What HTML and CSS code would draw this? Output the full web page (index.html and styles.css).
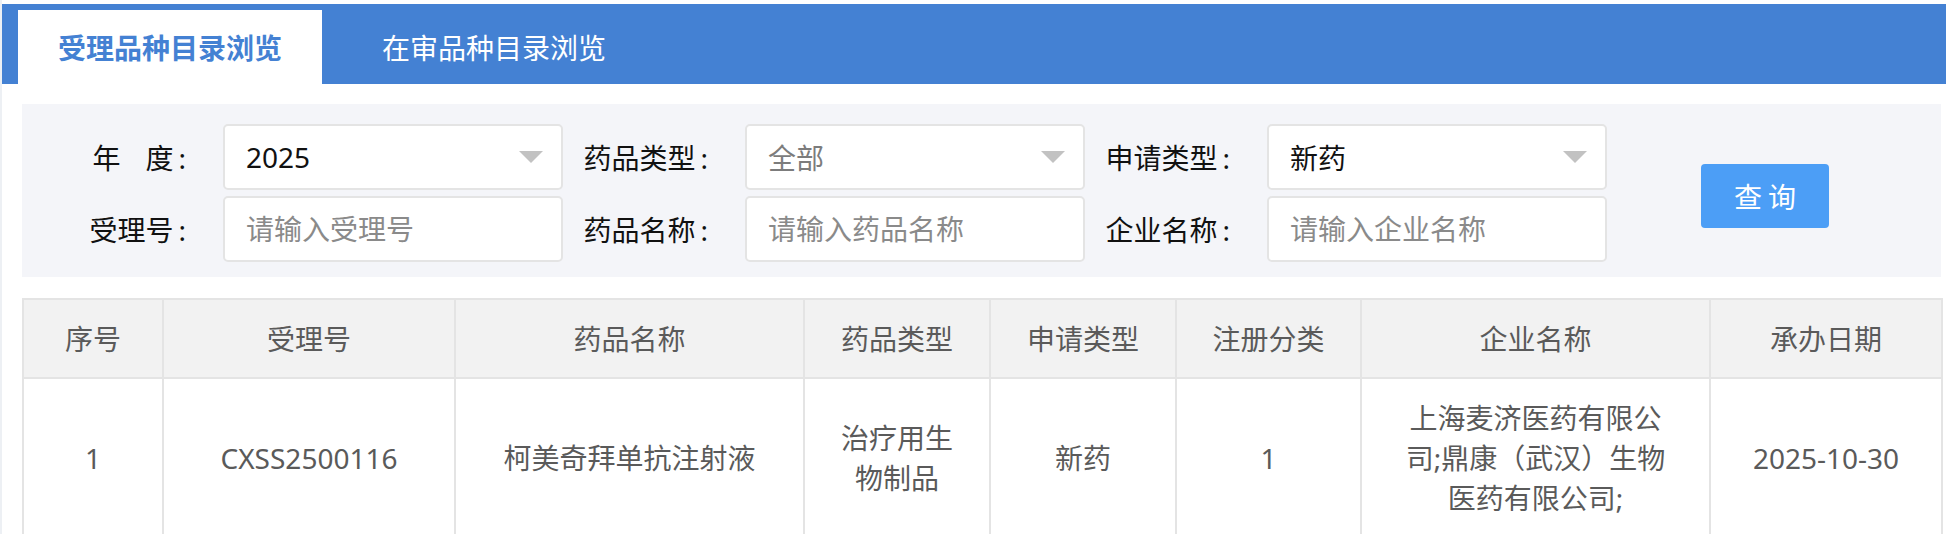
FILE: index.html
```html
<!DOCTYPE html>
<html lang="zh-CN">
<head>
<meta charset="UTF-8">
<meta name="viewport" content="width=device-width, initial-scale=1.0">
<title>受理品种目录浏览</title>
<link rel="stylesheet" href="styles.css">
</head>
<body>
    <div class="page">
        <!-- 标签页 -->
        <div class="tabs">
            <div class="tab active">受理品种目录浏览</div>
            <div class="tab">在审品种目录浏览</div>
        </div>

        <div class="content">
            <!-- 查询条件 -->
            <div class="filter">
                <div class="fields">
                    <div class="field">
                        <label class="label">年<span class="gap"></span>度<span class="colon">:</span></label>
                        <div class="box select">
                            <span class="value">2025</span>
                            <span class="arrow"></span>
                        </div>
                    </div>
                    <div class="field">
                        <label class="label">药品类型<span class="colon">:</span></label>
                        <div class="box select">
                            <span class="value muted">全部</span>
                            <span class="arrow"></span>
                        </div>
                    </div>
                    <div class="field">
                        <label class="label">申请类型<span class="colon">:</span></label>
                        <div class="box select">
                            <span class="value">新药</span>
                            <span class="arrow"></span>
                        </div>
                    </div>
                    <div class="field">
                        <label class="label">受理号<span class="colon">:</span></label>
                        <input class="box" type="text" placeholder="请输入受理号">
                    </div>
                    <div class="field">
                        <label class="label">药品名称<span class="colon">:</span></label>
                        <input class="box" type="text" placeholder="请输入药品名称">
                    </div>
                    <div class="field">
                        <label class="label">企业名称<span class="colon">:</span></label>
                        <input class="box" type="text" placeholder="请输入企业名称">
                    </div>
                </div>
                <button class="btn-search">查询</button>
            </div>

            <!-- 结果列表 -->
            <table class="list">
                <colgroup>
                    <col style="width:140px">
                    <col style="width:292px">
                    <col style="width:349px">
                    <col style="width:186px">
                    <col style="width:186px">
                    <col style="width:185px">
                    <col style="width:349px">
                    <col style="width:232px">
                </colgroup>
                <thead>
                    <tr>
                        <th>序号</th>
                        <th>受理号</th>
                        <th>药品名称</th>
                        <th>药品类型</th>
                        <th>申请类型</th>
                        <th>注册分类</th>
                        <th>企业名称</th>
                        <th>承办日期</th>
                    </tr>
                </thead>
                <tbody>
                    <tr>
                        <td>1</td>
                        <td>CXSS2500116</td>
                        <td class="wide">柯美奇拜单抗注射液</td>
                        <td>治疗用生物制品</td>
                        <td>新药</td>
                        <td>1</td>
                        <td class="wide">上海麦济医药有限公司;鼎康（武汉）生物医药有限公司;</td>
                        <td>2025-10-30</td>
                    </tr>
                </tbody>
            </table>
        </div>
    </div>
</body>
</html>
```

FILE: styles.css
```css
/* Styles généraux */
body {
    margin: 0;
    padding: 0;
    background: #edf0f4;
    font-family: "Noto Sans", "Noto Sans CJK SC", sans-serif;
    font-size: 28px;
    color: #1f1f1f;
}

.page {
    margin-left: 2px;
    padding-top: 4px;
    min-height: 100vh;
    background: #fff;
}

/* Tabs */
.tabs {
    display: flex;
    gap: 20px;
    height: 80px;
    padding: 6px 0 0 16px;
    box-sizing: border-box;
    background: #4481d3;
}
.tab {
    height: 74px;
    padding: 3px 40px 0;
    box-sizing: border-box;
    line-height: 70px;
    color: #fff;
    white-space: nowrap;
}
.tab.active {
    background: #fff;
    color: #4481d3;
    font-weight: bold;
}

.content {
    padding: 20px 5px 0 20px;
}

/* Filter */
.filter {
    display: flex;
    align-items: flex-start;
    padding: 20px 0 15px 19px;
    background: #f4f5f9;
}
.fields {
    display: grid;
    grid-template-columns: repeat(3, 522px);
    row-gap: 6px;
}
.field {
    display: flex;
    align-items: center;
}
.label {
    width: 145px;
    margin-right: 37px;
    text-align: right;
    white-space: nowrap;
    color: #111;
}
.label .gap {
    display: inline-block;
    width: 25px;
}
.label .colon {
    padding-left: 5px;
}
.box {
    width: 340px;
    height: 66px;
    box-sizing: border-box;
    margin: 0;
    padding: 0 18px 0 21px;
    border: 2px solid #e4e4e4;
    border-radius: 5px;
    background: #fff;
    font-family: inherit;
    font-size: 28px;
    color: #1f1f1f;
    outline: none;
}
.box::placeholder {
    color: #8a8a8a;
}
.select {
    display: flex;
    align-items: center;
    justify-content: space-between;
}
.select .value {
    color: #111;
}
.select .value.muted {
    color: #7c7c7c;
}
.arrow {
    width: 0;
    height: 0;
    border-left: 12px solid transparent;
    border-right: 12px solid transparent;
    border-top: 12px solid #c2c2c2;
}

.btn-search {
    margin: 40px 0 0 94px;
    width: 128px;
    height: 64px;
    border: none;
    border-radius: 4px;
    background: #4c9ef6;
    color: #fff;
    font-family: inherit;
    font-size: 28px;
    letter-spacing: 6px;
    text-indent: 6px;
    cursor: pointer;
}

/* Table */
.list {
    width: 1919px;
    margin-top: 21px;
    border-collapse: collapse;
    table-layout: fixed;
    color: #5a5a5a;
}
.list th,
.list td {
    border: 2px solid #e4e4e4;
    text-align: center;
    padding: 0 30px;
    font-weight: normal;
}
.list th {
    height: 77px;
    background: #f2f2f2;
    line-height: 40px;
}
.list td {
    padding-top: 19px;
    padding-bottom: 21px;
    line-height: 40px;
}
.list td.wide {
    padding-left: 40px;
    padding-right: 40px;
}
```
